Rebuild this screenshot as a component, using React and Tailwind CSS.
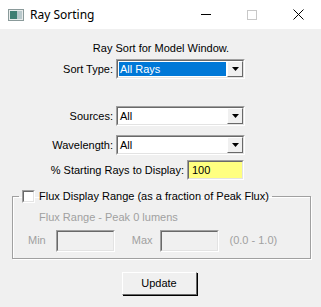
import React from "react";

const font = "font-['Liberation_Sans',Arial,sans-serif]";

const DropArrow = () => (
  <div className="w-[16px] h-full bg-[#f0f0f0] border-l border-t border-white border-r border-b border-r-[#696969] border-b-[#696969] flex items-center justify-center">
    <svg width="7" height="4" viewBox="0 0 7 4">
      <path d="M0 0h7L3.5 4z" fill="#000" />
    </svg>
  </div>
);

const Combo = ({ value, selected }) => (
  <div className="w-[129px] h-[20px] border border-[#a0a0a0] border-r-white border-b-white bg-white">
    <div className="h-full border border-[#696969] border-r-[#e3e3e3] border-b-[#e3e3e3] flex items-stretch">
      <div className="flex-1 flex items-center p-[1px]">
        <div
          className={
            selected
              ? "w-full h-full bg-[#0078d7] text-white flex items-center pl-[1px]"
              : "w-full h-full flex items-center pl-[1px] text-black"
          }
        >
          {value}
        </div>
      </div>
      <DropArrow />
    </div>
  </div>
);

const SunkenBox = ({ className, children }) => (
  <div className={`border border-[#a0a0a0] border-r-white border-b-white ${className}`}>
    <div className="w-full h-full border border-[#696969] border-r-[#e3e3e3] border-b-[#e3e3e3] flex items-center pl-[3px]">
      {children}
    </div>
  </div>
);

export default function App() {
  return (
    <div className={`w-[321px] h-[307px] flex flex-col text-[11px] text-black ${font}`}>
      {/* title bar */}
      <div className="h-[29px] bg-white flex items-center">
        <svg className="ml-[8px]" width="16" height="12" viewBox="0 0 16 12">
          <rect x="0.5" y="0.5" width="15" height="11" fill="#e8ecec" stroke="#8a9a9a" />
          <rect x="2" y="2" width="7" height="8" fill="#3f7f74" />
          <rect x="9" y="2" width="5" height="8" fill="#b9c9cc" />
        </svg>
        <span className="ml-[6px] text-[12px] font-['Noto_Sans',sans-serif] leading-none">Ray Sorting</span>
        <div className="ml-auto flex items-center">
          <div className="w-[46px] flex justify-center">
            <div className="w-[10px] h-px bg-black" />
          </div>
          <div className="w-[46px] flex justify-center">
            <div className="w-[10px] h-[10px] border border-[#c8c8c8]" />
          </div>
          <div className="w-[46px] flex justify-center">
            <svg width="11" height="11" viewBox="0 0 11 11">
              <path d="M0.5 0.5l10 10M10.5 0.5l-10 10" stroke="#000" strokeWidth="1" />
            </svg>
          </div>
        </div>
      </div>

      {/* body */}
      <div className="flex-1 bg-[#f0f0f0] flex flex-col">
        <div className="mt-[12px] text-center pl-[1px] leading-[14px]">Ray Sort for Model Window.</div>

        <div className="mt-[4px] flex items-center">
          <div className="w-[113px] text-right">Sort Type:</div>
          <div className="ml-[3px]">
            <Combo value="All Rays" selected />
          </div>
        </div>

        <div className="mt-[27px] flex items-center">
          <div className="w-[113px] text-right">Sources:</div>
          <div className="ml-[3px]">
            <Combo value="All" />
          </div>
        </div>

        <div className="mt-[9px] flex items-center">
          <div className="w-[113px] text-right">Wavelength:</div>
          <div className="ml-[3px]">
            <Combo value="All" />
          </div>
        </div>

        <div className="mt-[5px] flex items-center">
          <div className="w-[184px] text-right">% Starting Rays to Display:</div>
          <SunkenBox className="ml-[3px] w-[57px] h-[20px] bg-[#ffff80]">100</SunkenBox>
        </div>

        {/* group box */}
        <fieldset className="mt-[8px] mx-[12px] w-[299px] h-[71px] border border-[#a0a0a0] shadow-[inset_1px_1px_0_#fff,1px_1px_0_#fff] px-[9px]">
          <legend className="flex items-center px-[3px] -ml-[3px]">
            <div className="w-[13px] h-[13px] bg-white border border-[#a0a0a0] border-r-white border-b-white">
              <div className="w-full h-full border border-[#696969] border-r-[#e3e3e3] border-b-[#e3e3e3]" />
            </div>
            <span className="ml-[4px]">Flux Display Range (as a fraction of Peak Flux)</span>
          </legend>
          <div className="text-[#a0a0a0] mt-[5px] pl-[17px] leading-[14px]">Flux Range - Peak 0 lumens</div>
          <div className="mt-[6px] flex items-center text-[#a0a0a0]">
            <span className="ml-[6px]">Min</span>
            <div className="ml-[10px] w-[59px] h-[22px] border border-[#a0a0a0] border-r-white border-b-white">
              <div className="w-full h-full border border-[#696969] border-r-[#e3e3e3] border-b-[#e3e3e3] bg-[#f0f0f0]" />
            </div>
            <span className="ml-[17px]">Max</span>
            <div className="ml-[7px] w-[59px] h-[22px] border border-[#a0a0a0] border-r-white border-b-white">
              <div className="w-full h-full border border-[#696969] border-r-[#e3e3e3] border-b-[#e3e3e3] bg-[#f0f0f0]" />
            </div>
            <span className="ml-[11px]">(0.0 - 1.0)</span>
          </div>
        </fieldset>

        <div className="mt-[13px] flex justify-center pr-[3px]">
          <button className="w-[75px] h-[23px] bg-[#f0f0f0] border border-white border-r-[#696969] border-b-[#696969] shadow-[1px_1px_0_#000] text-black">
            Update
          </button>
        </div>
      </div>
    </div>
  );
}
